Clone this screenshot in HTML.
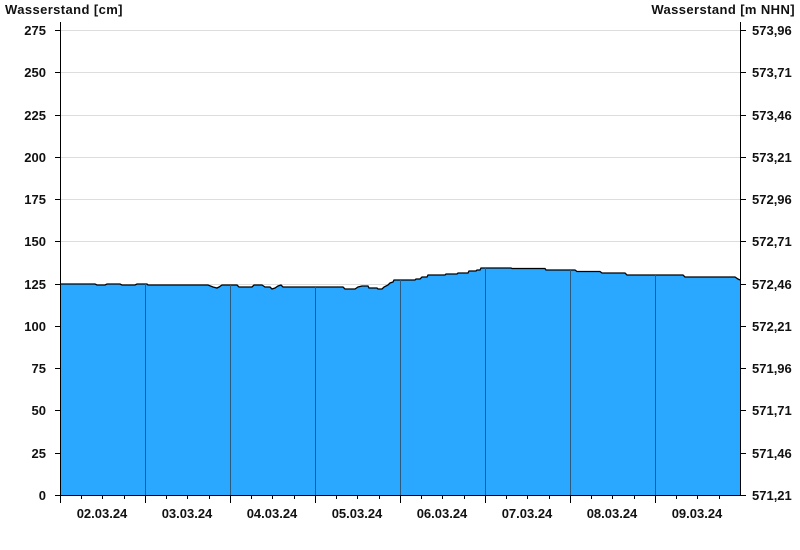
<!DOCTYPE html>
<html><head><meta charset="utf-8"><style>
html,body{margin:0;padding:0;background:#fff;width:800px;height:550px;overflow:hidden}
svg text{font-family:"Liberation Sans",Arial,sans-serif;font-weight:bold;font-size:13px;fill:#111}
</style></head><body>
<svg width="800" height="550" viewBox="0 0 800 550" xmlns="http://www.w3.org/2000/svg">
<text x="5" y="14" style="letter-spacing:0.4px">Wasserstand [cm]</text>
<text x="795" y="14" text-anchor="end" style="letter-spacing:0.4px">Wasserstand [m NHN]</text>
<g stroke="#dddddd" stroke-width="1">
<line x1="60" x2="740" y1="30.5" y2="30.5"/><line x1="60" x2="740" y1="72.5" y2="72.5"/>
<line x1="60" x2="740" y1="115.5" y2="115.5"/><line x1="60" x2="740" y1="157.5" y2="157.5"/>
<line x1="60" x2="740" y1="199.5" y2="199.5"/><line x1="60" x2="740" y1="241.5" y2="241.5"/>
<line x1="60" x2="740" y1="284.5" y2="284.5"/>
</g>
<polygon fill="#2aa8ff" stroke="none" points="60,495 60,284 95,284 97,285 105,285 107,284 120,284 122,285 135,285 137,284 147,284 148,285 205,285 208,285 213,287 217,288 219,287 222,285 237,285 239,287 252,287 254,285 262,285 265,287 270,287 272,289 275,288 278,286 281,285 283,287 343,287 345,289 355,289 358,287 362,286 368,286 369,288 377,288 378,289 382,289 384,287 388,285 390,283 393,282 394,280 415,280 416,279 420,279 422,277 427,277 428,275 445,275 446,274 457,274 458,273 468,273 469,271 476,271 477,270 480,270 481,268 511,268 512,268.5 545,268.5 546,270 575,270 577,271.5 600,271.5 602,273 625,273 627,275 683,275 685,277 735,277 738,279 740,280 740,495"/>
<polyline fill="none" stroke="#000" stroke-width="1.3" points="60,284 95,284 97,285 105,285 107,284 120,284 122,285 135,285 137,284 147,284 148,285 205,285 208,285 213,287 217,288 219,287 222,285 237,285 239,287 252,287 254,285 262,285 265,287 270,287 272,289 275,288 278,286 281,285 283,287 343,287 345,289 355,289 358,287 362,286 368,286 369,288 377,288 378,289 382,289 384,287 388,285 390,283 393,282 394,280 415,280 416,279 420,279 422,277 427,277 428,275 445,275 446,274 457,274 458,273 468,273 469,271 476,271 477,270 480,270 481,268 511,268 512,268.5 545,268.5 546,270 575,270 577,271.5 600,271.5 602,273 625,273 627,275 683,275 685,277 735,277 738,279 740,280"/>
<g stroke="#2a5a80" stroke-width="1">
<line x1="145.5" x2="145.5" y1="284" y2="495"/><line x1="230.5" x2="230.5" y1="285" y2="495"/>
<line x1="315.5" x2="315.5" y1="287" y2="495"/><line x1="400.5" x2="400.5" y1="280" y2="495"/>
<line x1="485.5" x2="485.5" y1="268" y2="495"/><line x1="570.5" x2="570.5" y1="270" y2="495"/>
<line x1="655.5" x2="655.5" y1="275" y2="495"/>
</g>
<g stroke="#000" stroke-width="1">
<line x1="60.5" x2="60.5" y1="22" y2="495"/><line x1="740.5" x2="740.5" y1="22" y2="495"/>
<line x1="60" x2="741" y1="495.5" y2="495.5"/>
<path d="M55 30.5H60M55 72.5H60M55 115.5H60M55 157.5H60M55 199.5H60M55 241.5H60M55 284.5H60M55 326.5H60M55 368.5H60M55 410.5H60M55 453.5H60M55 495.5H60"/>
<path d="M740 30.5H746M740 72.5H746M740 115.5H746M740 157.5H746M740 199.5H746M740 241.5H746M740 284.5H746M740 326.5H746M740 368.5H746M740 410.5H746M740 453.5H746M740 495.5H746"/>
<path d="M60.5 495V503M145.5 495V503M230.5 495V503M315.5 495V503M400.5 495V503M485.5 495V503M570.5 495V503M655.5 495V503"/>
<path d="M81.5 495V499M102.5 495V499M124.5 495V499M166.5 495V499M187.5 495V499M209.5 495V499M251.5 495V499M272.5 495V499M294.5 495V499M336.5 495V499M357.5 495V499M379.5 495V499M421.5 495V499M442.5 495V499M464.5 495V499M506.5 495V499M527.5 495V499M549.5 495V499M591.5 495V499M612.5 495V499M634.5 495V499M676.5 495V499M697.5 495V499M719.5 495V499"/>
</g>
<g text-anchor="end">
<text x="46" y="35">275</text><text x="46" y="77">250</text><text x="46" y="120">225</text>
<text x="46" y="162">200</text><text x="46" y="204">175</text><text x="46" y="246">150</text>
<text x="46" y="289">125</text><text x="46" y="331">100</text><text x="46" y="373">75</text>
<text x="46" y="415">50</text><text x="46" y="458">25</text><text x="46" y="500">0</text>
</g>
<g>
<text x="752" y="35">573,96</text><text x="752" y="77">573,71</text><text x="752" y="120">573,46</text>
<text x="752" y="162">573,21</text><text x="752" y="204">572,96</text><text x="752" y="246">572,71</text>
<text x="752" y="289">572,46</text><text x="752" y="331">572,21</text><text x="752" y="373">571,96</text>
<text x="752" y="415">571,71</text><text x="752" y="458">571,46</text><text x="752" y="500">571,21</text>
</g>
<g text-anchor="middle">
<text x="102" y="518">02.03.24</text><text x="187" y="518">03.03.24</text><text x="272" y="518">04.03.24</text>
<text x="357" y="518">05.03.24</text><text x="442" y="518">06.03.24</text><text x="527" y="518">07.03.24</text>
<text x="612" y="518">08.03.24</text><text x="697" y="518">09.03.24</text>
</g>
</svg>
</body></html>
